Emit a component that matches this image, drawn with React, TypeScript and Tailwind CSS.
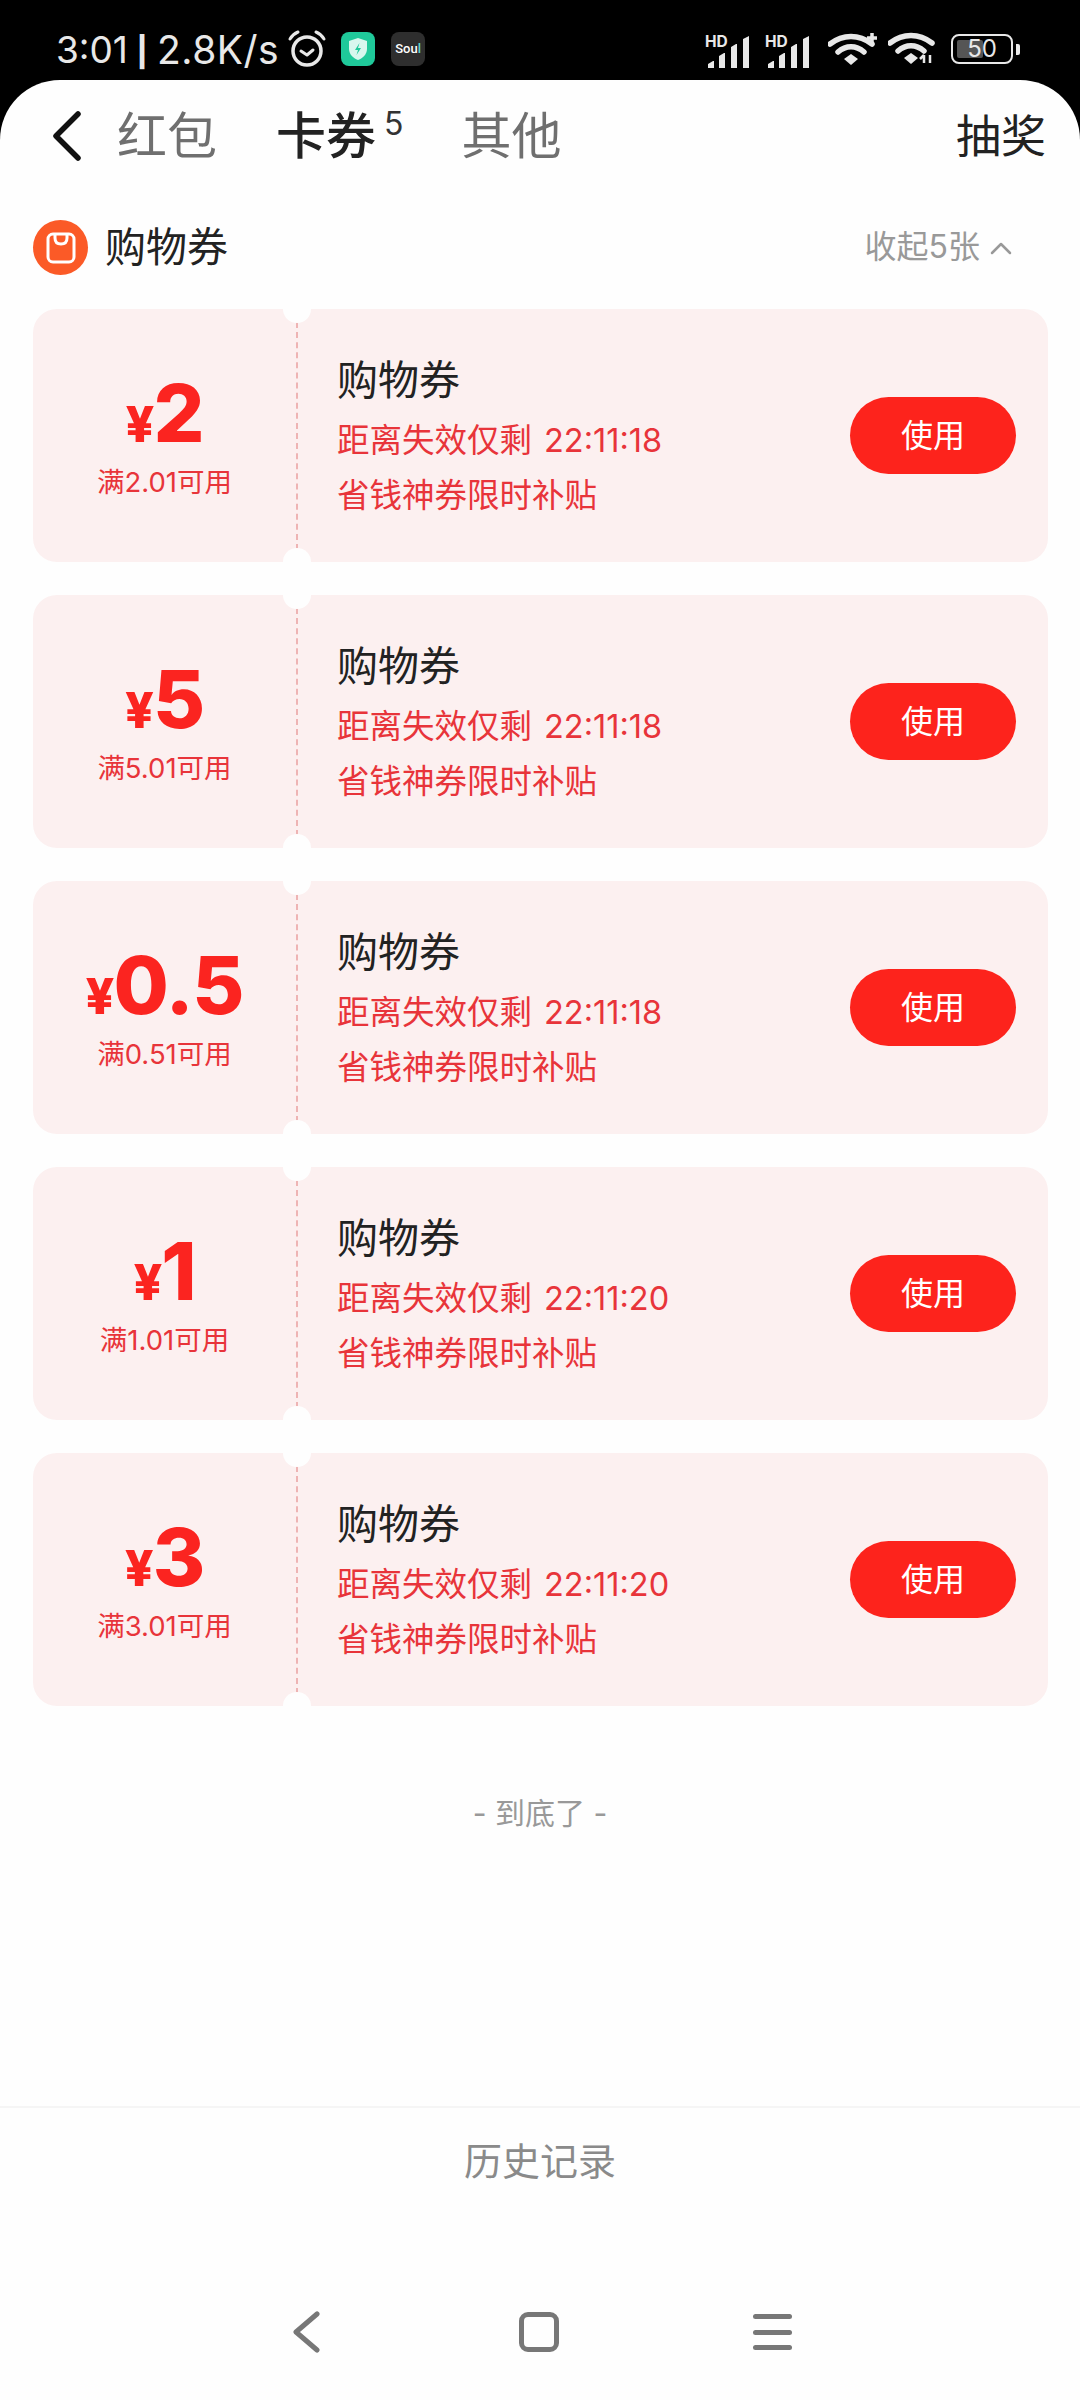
import React from "react";

const CJK = "font-['Inter','Noto_Sans_CJK_SC',sans-serif]";

type Coupon = { amount: string; limit: string; time: string };

const coupons: Coupon[] = [
  { amount: "2", limit: "满2.01可用", time: "22:11:18" },
  { amount: "5", limit: "满5.01可用", time: "22:11:18" },
  { amount: "0.5", limit: "满0.51可用", time: "22:11:18" },
  { amount: "1", limit: "满1.01可用", time: "22:11:20" },
  { amount: "3", limit: "满3.01可用", time: "22:11:20" },
];

const Signal = () => (
  <svg width="50" height="37" viewBox="0 -4 50 37" fill="#e8e8e8">
    <text x="0" y="12" fontSize="15.500" fontWeight="700" fontFamily="Inter, sans-serif">HD</text>
    <path d="M3 33v-4l5-3h1v7zM14 33V21l5-3h1v15zM26 33V12l5-3h1v24zM38 33V4l6-3v32z" />
  </svg>
);

const WifiArcs = () => (
  <>
    <path d="M2 12C15 2 31 2 44 12" fill="none" stroke="#e8e8e8" strokeWidth="5.500" strokeLinecap="round" />
    <path d="M10 20C18 13 28 13 36 20" fill="none" stroke="#e8e8e8" strokeWidth="5.500" strokeLinecap="round" />
    <path d="M16 27l7-5 7 5-7 6z" fill="#e8e8e8" />
  </>
);

const StatusBar = () => (
  <div className="flex h-[80px] items-center bg-black pl-[56px] pr-[60px] pt-[18px] text-[#e8e8e8]">
    <span className="text-[37px] leading-none">3:01</span>
    <span className="ml-[9px] font-['Liberation_Sans',sans-serif] text-[36px] font-bold leading-none">|</span>
    <span className="ml-[10px] text-[39px] leading-none tracking-[0.5px]">2.8K/s</span>
    <svg className="ml-[8px]" width="40" height="38" viewBox="0 0 40 38" fill="none" stroke="#e8e8e8">
      <circle cx="20" cy="21" r="14" strokeWidth="3.500" />
      <path d="M14 21l6 4 6-5" strokeWidth="3" strokeLinecap="round" strokeLinejoin="round" />
      <path d="M3 9q3-5 8-7M37 9q-3-5-8-7" strokeWidth="3" strokeLinecap="round" />
    </svg>
    <div className="ml-[14px] flex h-[34px] w-[34px] items-center justify-center rounded-[8px] bg-[#1fc99a]">
      <svg width="22" height="24" viewBox="0 0 22 24">
        <path d="M11 1l9 3v8c0 5-4 9-9 11C6 21 2 17 2 12V4z" fill="#d8f7ee" />
        <path d="M12.500 6L8 13h3l-1.500 5L14 11h-3z" fill="#1fc99a" />
      </svg>
    </div>
    <div className="ml-[16px] flex h-[34px] w-[34px] items-center justify-center rounded-[8px] bg-[#2e2e2e] font-['Roboto',sans-serif] text-[13px] font-medium text-white">
      Sou<span className="text-[#5fd6d0]">l</span>
    </div>
    <div className="ml-auto flex items-center">
      <Signal />
      <div className="ml-[10px]">
        <Signal />
      </div>
      <svg className="ml-[13px]" width="50" height="34" viewBox="0 0 50 34">
        <WifiArcs />
        <path d="M44 1v10M39 6h10" stroke="#e8e8e8" strokeWidth="3.500" />
      </svg>
      <svg className="ml-[10px]" width="48" height="36" viewBox="0 0 48 36">
        <WifiArcs />
        <path d="M36 24v8M32 28l4-4M42 24v8" stroke="#e8e8e8" strokeWidth="2.500" />
      </svg>
      <div className="relative ml-[15px] flex h-[30px] w-[62px] items-center justify-center rounded-[8px] border-[2px] border-[#e8e8e8]">
        <div className="absolute bottom-[4px] left-[4px] top-[4px] w-[26px] rounded-[2px] bg-[#555]" />
        <span className="relative text-[24px] leading-none">50</span>
      </div>
      <div className="ml-[3px] h-[11px] w-[4px] rounded-r-[2px] bg-[#e8e8e8]" />
    </div>
  </div>
);

const Header = () => (
  <div className="flex h-[112px] items-center pl-[53px] pr-[34px]">
    <svg width="28" height="50" viewBox="0 0 28 50" fill="none">
      <path d="M25 3L3 25l22 22" stroke="#111" strokeWidth="5.500" strokeLinecap="round" strokeLinejoin="round" />
    </svg>
    <span className="ml-[36px] text-[50px] leading-none text-[#6f6f6f]">红包</span>
    <span className="ml-[59px] text-[50px] font-medium leading-none text-[#222]">卡券</span>
    <span className="ml-[8px] mb-[24px] text-[32px] leading-none text-[#333]">5</span>
    <span className="ml-[58px] text-[50px] leading-none text-[#6f6f6f]">其他</span>
    <span className="ml-auto text-[45px] leading-none text-[#222]">抽奖</span>
  </div>
);

const SectionTitle = () => (
  <div className="mt-[28px] flex h-[55px] items-center pl-[33px] pr-[68px]">
    <div className="flex h-[55px] w-[55px] items-center justify-center rounded-full bg-[#fb5a27]">
      <svg width="30" height="32" viewBox="0 0 30 32" fill="none" stroke="#fff">
        <rect x="2" y="2" width="26" height="28" rx="5" strokeWidth="3" />
        <path d="M9 3v3q0 6 6 6t6-6V3" strokeWidth="3" strokeLinecap="round" />
      </svg>
    </div>
    <span className="ml-[17px] text-[41px] leading-none text-[#222]">购物券</span>
    <span className="ml-auto mb-[2px] text-[32px] leading-none text-[#999]">收起5张</span>
    <svg className="ml-[10px]" width="22" height="14" viewBox="0 0 22 14" fill="none">
      <path d="M2 12l9-9 9 9" stroke="#999" strokeWidth="2.500" strokeLinecap="round" strokeLinejoin="round" />
    </svg>
  </div>
);

const CouponCard = ({ coupon }: { coupon: Coupon }) => (
  <div className="relative flex h-[253px] items-center rounded-[24px] bg-[#fcf0f0]">
    <div className="absolute left-[250px] top-[-14px] h-[28px] w-[28px] rounded-full bg-[#fefefe]" />
    <div className="absolute bottom-[-14px] left-[250px] h-[28px] w-[28px] rounded-full bg-[#fefefe]" />
    <div className="flex w-[263px] flex-col items-center">
      <div className="flex h-[80px] items-baseline tracking-[-1px] text-[#fb2420]">
        <span className="text-[50px] font-extrabold leading-none">¥</span>
        <span className="text-[80px] font-extrabold leading-none">{coupon.amount}</span>
      </div>
      <span className="mt-[12px] text-[27.500px] leading-[34px] text-[#e8343a]">{coupon.limit}</span>
    </div>
    <div className="flex h-[228px] flex-1 items-center border-l-[2px] border-dashed border-[#eeb4b4] pl-[39px] pr-[32px]">
      <div className="mt-[6px] flex-1">
        <div className="text-[41px] leading-[50px] text-[#222]">购物券</div>
        <div className="mt-[8px] flex items-center text-[32.500px] leading-[55px] text-[#e8343a]">
          距离失效仅剩
          <span className="ml-[12px]">{coupon.time}</span>
        </div>
        <div className="text-[32.500px] leading-[55px] text-[#e8343a]">省钱神券限时补贴</div>
      </div>
      <div className="flex h-[77px] w-[166px] items-center justify-center rounded-full bg-[#fd231c] text-[32px] text-white">
        使用
      </div>
    </div>
  </div>
);

const Footer = () => (
  <div className="flex h-[294px] flex-col items-center border-t-[2px] border-[#f5f5f5] pt-[33px]">
    <span className="text-[38px] leading-[40px] text-[#8a8a8a]">历史记录</span>
    <div className="mt-[131px] flex h-[40px] w-full items-center">
      <svg className="ml-[292px]" width="28" height="42" viewBox="0 0 28 42" fill="none">
        <path d="M25 3L4 21l21 18" stroke="#777" strokeWidth="5" strokeLinecap="round" strokeLinejoin="round" />
      </svg>
      <div className="ml-[199px] h-[40px] w-[40px] rounded-[9px] border-[5px] border-[#777]" />
      <div className="ml-[194px] flex h-[36px] w-[39px] flex-col justify-between">
        <div className="h-[5px] rounded-full bg-[#777]" />
        <div className="h-[5px] rounded-full bg-[#777]" />
        <div className="h-[5px] rounded-full bg-[#777]" />
      </div>
    </div>
  </div>
);

const App = () => {
  return (
    <div className={`flex h-[2400px] w-[1080px] flex-col bg-black ${CJK}`}>
      <StatusBar />
      <div className="flex flex-1 flex-col rounded-t-[60px] bg-[#fefefe]">
        <Header />
        <SectionTitle />
        <div className="mt-[34px] flex flex-col gap-[33px] pl-[33px] pr-[32px]">
          {coupons.map((coupon, i) => (
            <CouponCard key={i} coupon={coupon} />
          ))}
        </div>
        <div className="mt-[87px] text-center text-[30px] leading-[40px] text-[#999]">- 到底了 -</div>
        <div className="flex-1" />
        <Footer />
      </div>
    </div>
  );
};

export default App;
